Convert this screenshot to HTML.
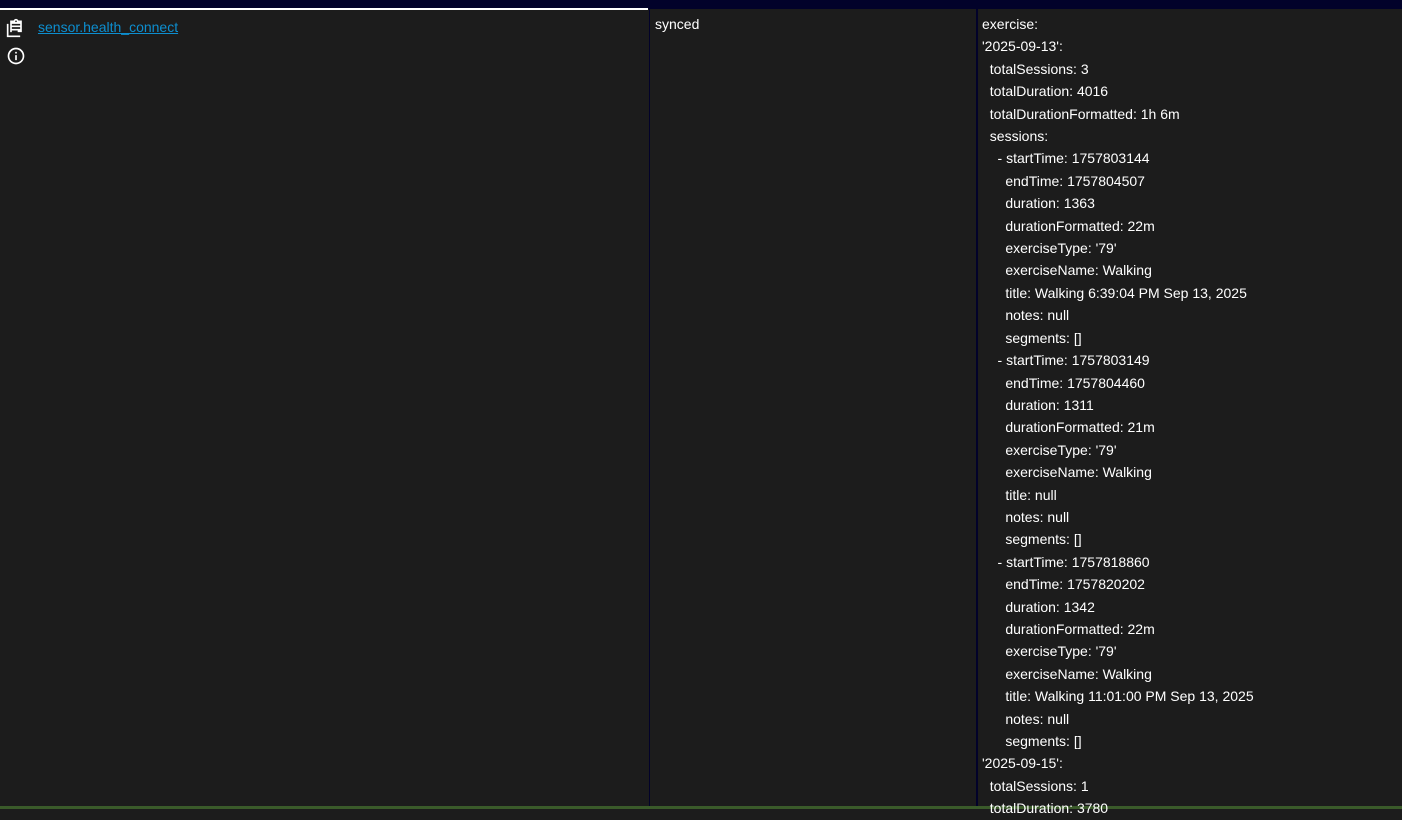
<!DOCTYPE html>
<html><head><style>
html,body{margin:0;padding:0;width:1402px;height:809px;overflow:hidden;background:#1c1c1c;font-family:"Liberation Sans",sans-serif;color:#fff;font-size:14px}
.top{position:absolute;left:0;top:0;width:1402px;height:9px;background:#02022a}
.wl{position:absolute;left:0;top:8px;width:648px;height:2px;background:#fff}
.v1{position:absolute;left:649px;top:9px;width:1px;height:800px;background:#02022a}
.v2{position:absolute;left:976px;top:9px;width:2px;height:800px;background:#02022a}
.bot{position:absolute;left:0;top:806px;width:1402px;height:3px;background:#3a5a2a}
.link{position:absolute;left:38px;top:19px;color:#0d8ecf;text-decoration:underline;font-size:14px}
.syn{position:absolute;left:655px;top:16px}
.yaml{position:absolute;left:982px;top:13px;white-space:pre;line-height:22.4px;margin:0;font-family:"Liberation Sans",sans-serif;font-size:14px}
</style></head><body>
<div class="top"></div><div class="wl"></div><div class="v1"></div><div class="v2"></div><div class="bot"></div>
<svg style="position:absolute;left:6px;top:18px" width="20" height="20" viewBox="0 0 24 24"><path fill="#fff" d="M19 3h-4.18C14.4 1.84 13.3 1 12 1s-2.4.84-2.82 2H5v14h14V3zm-7 0a1 1 0 1 1 0 2 1 1 0 0 1 0-2zM7 7h10v2H7zm0 4h10v2H7zm0 4h7v2H7zM3 7H1v16h16v-2H3z"/></svg>
<svg style="position:absolute;left:6px;top:46px" width="20" height="20" viewBox="0 0 24 24"><path fill="#fff" d="M11 7h2v2h-2zm0 4h2v6h-2zm1-9C6.48 2 2 6.48 2 12s4.48 10 10 10 10-4.48 10-10S17.52 2 12 2zm0 18c-4.41 0-8-3.59-8-8s3.59-8 8-8 8 3.59 8 8-3.59 8-8 8z"/></svg>
<a class="link">sensor.health_connect</a>
<div class="syn">synced</div>
<pre class="yaml">exercise:
'2025-09-13':
  totalSessions: 3
  totalDuration: 4016
  totalDurationFormatted: 1h 6m
  sessions:
    - startTime: 1757803144
      endTime: 1757804507
      duration: 1363
      durationFormatted: 22m
      exerciseType: '79'
      exerciseName: Walking
      title: Walking 6:39:04 PM Sep 13, 2025
      notes: null
      segments: []
    - startTime: 1757803149
      endTime: 1757804460
      duration: 1311
      durationFormatted: 21m
      exerciseType: '79'
      exerciseName: Walking
      title: null
      notes: null
      segments: []
    - startTime: 1757818860
      endTime: 1757820202
      duration: 1342
      durationFormatted: 22m
      exerciseType: '79'
      exerciseName: Walking
      title: Walking 11:01:00 PM Sep 13, 2025
      notes: null
      segments: []
'2025-09-15':
  totalSessions: 1
  totalDuration: 3780</pre>
</body></html>
